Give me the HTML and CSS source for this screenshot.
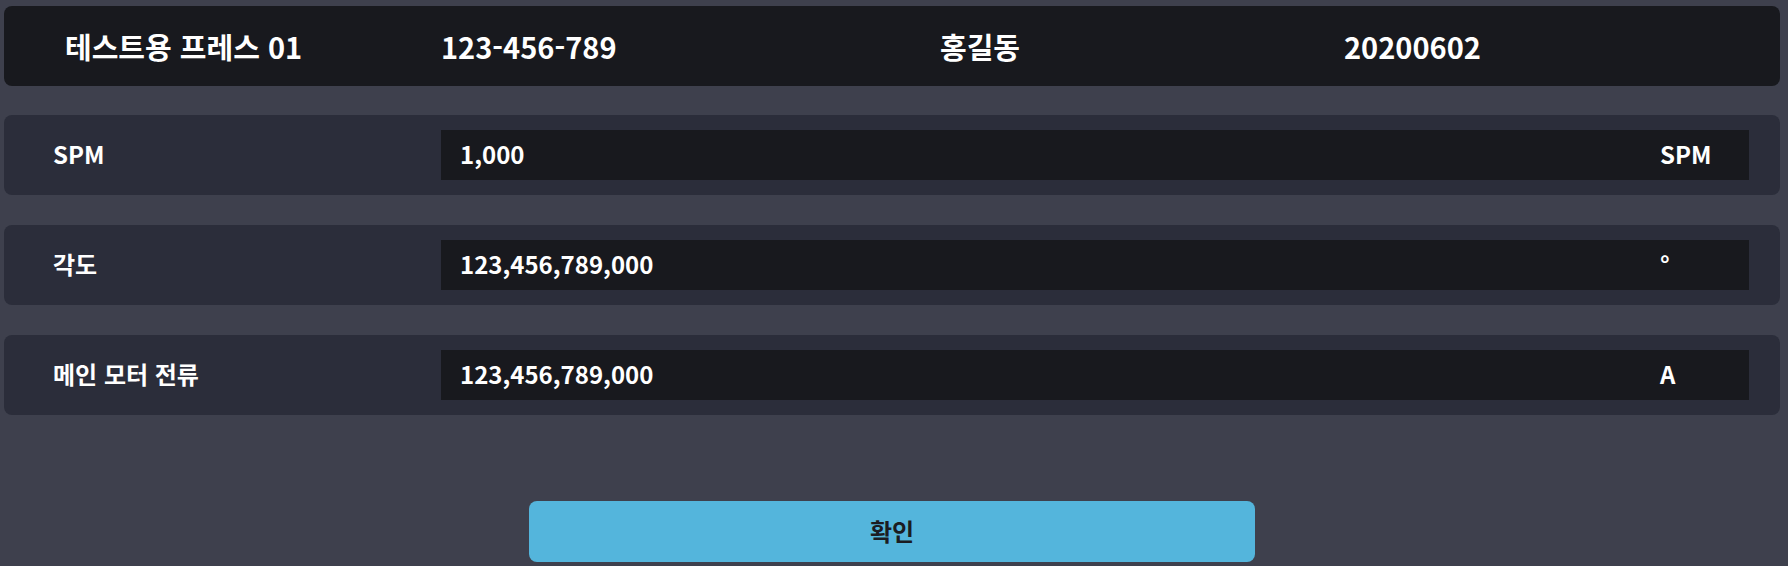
FILE: index.html
```html
<!DOCTYPE html>
<html lang="ko">
<head>
<meta charset="utf-8">
<title>프레스 설정</title>
<link rel="stylesheet" href="styles.css">
</head>
<body>
<div class="page">
  <div class="header">
    <div class="hcell">테스트용 프레스 01</div>
    <div class="hcell">123-456-789</div>
    <div class="hcell">홍길동</div>
    <div class="hcell">20200602</div>
  </div>
  <div class="row">
    <div class="label">SPM</div>
    <div class="field"><span class="value">1,000</span><span class="unit">SPM</span></div>
  </div>
  <div class="row">
    <div class="label">각도</div>
    <div class="field"><span class="value">123,456,789,000</span><span class="unit">°</span></div>
  </div>
  <div class="row">
    <div class="label">메인 모터 전류</div>
    <div class="field"><span class="value">123,456,789,000</span><span class="unit">A</span></div>
  </div>
  <div class="actions">
    <button class="confirm" type="button">확인</button>
  </div>
</div>
</body>
</html>
```
FILE: styles.css
```css
html, body {
  margin: 0;
  padding: 0;
  background: #3e404d;
}
body {
  font-family: "Noto Sans CJK KR", "Noto Sans", sans-serif;
  font-weight: 700;
  color: #ffffff;
}
.page {
  width: 1776px;
  padding: 6px 0 0 4px;
  display: flex;
  flex-direction: column;
}
.header {
  height: 80px;
  background: #18191e;
  border-radius: 8px;
  display: grid;
  grid-template-columns: 376px 499px 404px 1fr;
  align-items: center;
  padding-left: 61px;
  font-size: 29px;
}
.hcell {
  white-space: nowrap;
}
.row {
  margin-top: 29px;
  height: 80px;
  background: #2b2d3a;
  border-radius: 8px;
  display: flex;
  align-items: center;
}
.row + .row {
  margin-top: 30px;
}
.label {
  width: 388px;
  padding-left: 49px;
  padding-bottom: 3px;
  font-size: 24px;
}
.field {
  flex: 1;
  box-sizing: border-box;
  margin-right: 31px;
  height: 50px;
  background: #18191e;
  display: flex;
  align-items: center;
  padding: 0 0 3px 19px;
}
.value {
  flex: 1;
  font-size: 24px;
}
.unit {
  width: 89px;
  font-size: 24px;
}
.actions {
  display: flex;
  justify-content: center;
  margin-top: 86px;
}
.confirm {
  width: 726px;
  height: 61px;
  border: none;
  border-radius: 8px;
  background: #54b5dc;
  color: #1b1c22;
  font-family: "Noto Sans CJK KR", "Noto Sans", sans-serif;
  font-weight: 700;
  font-size: 24px;
  padding: 0 0 3px 0;
}
```
